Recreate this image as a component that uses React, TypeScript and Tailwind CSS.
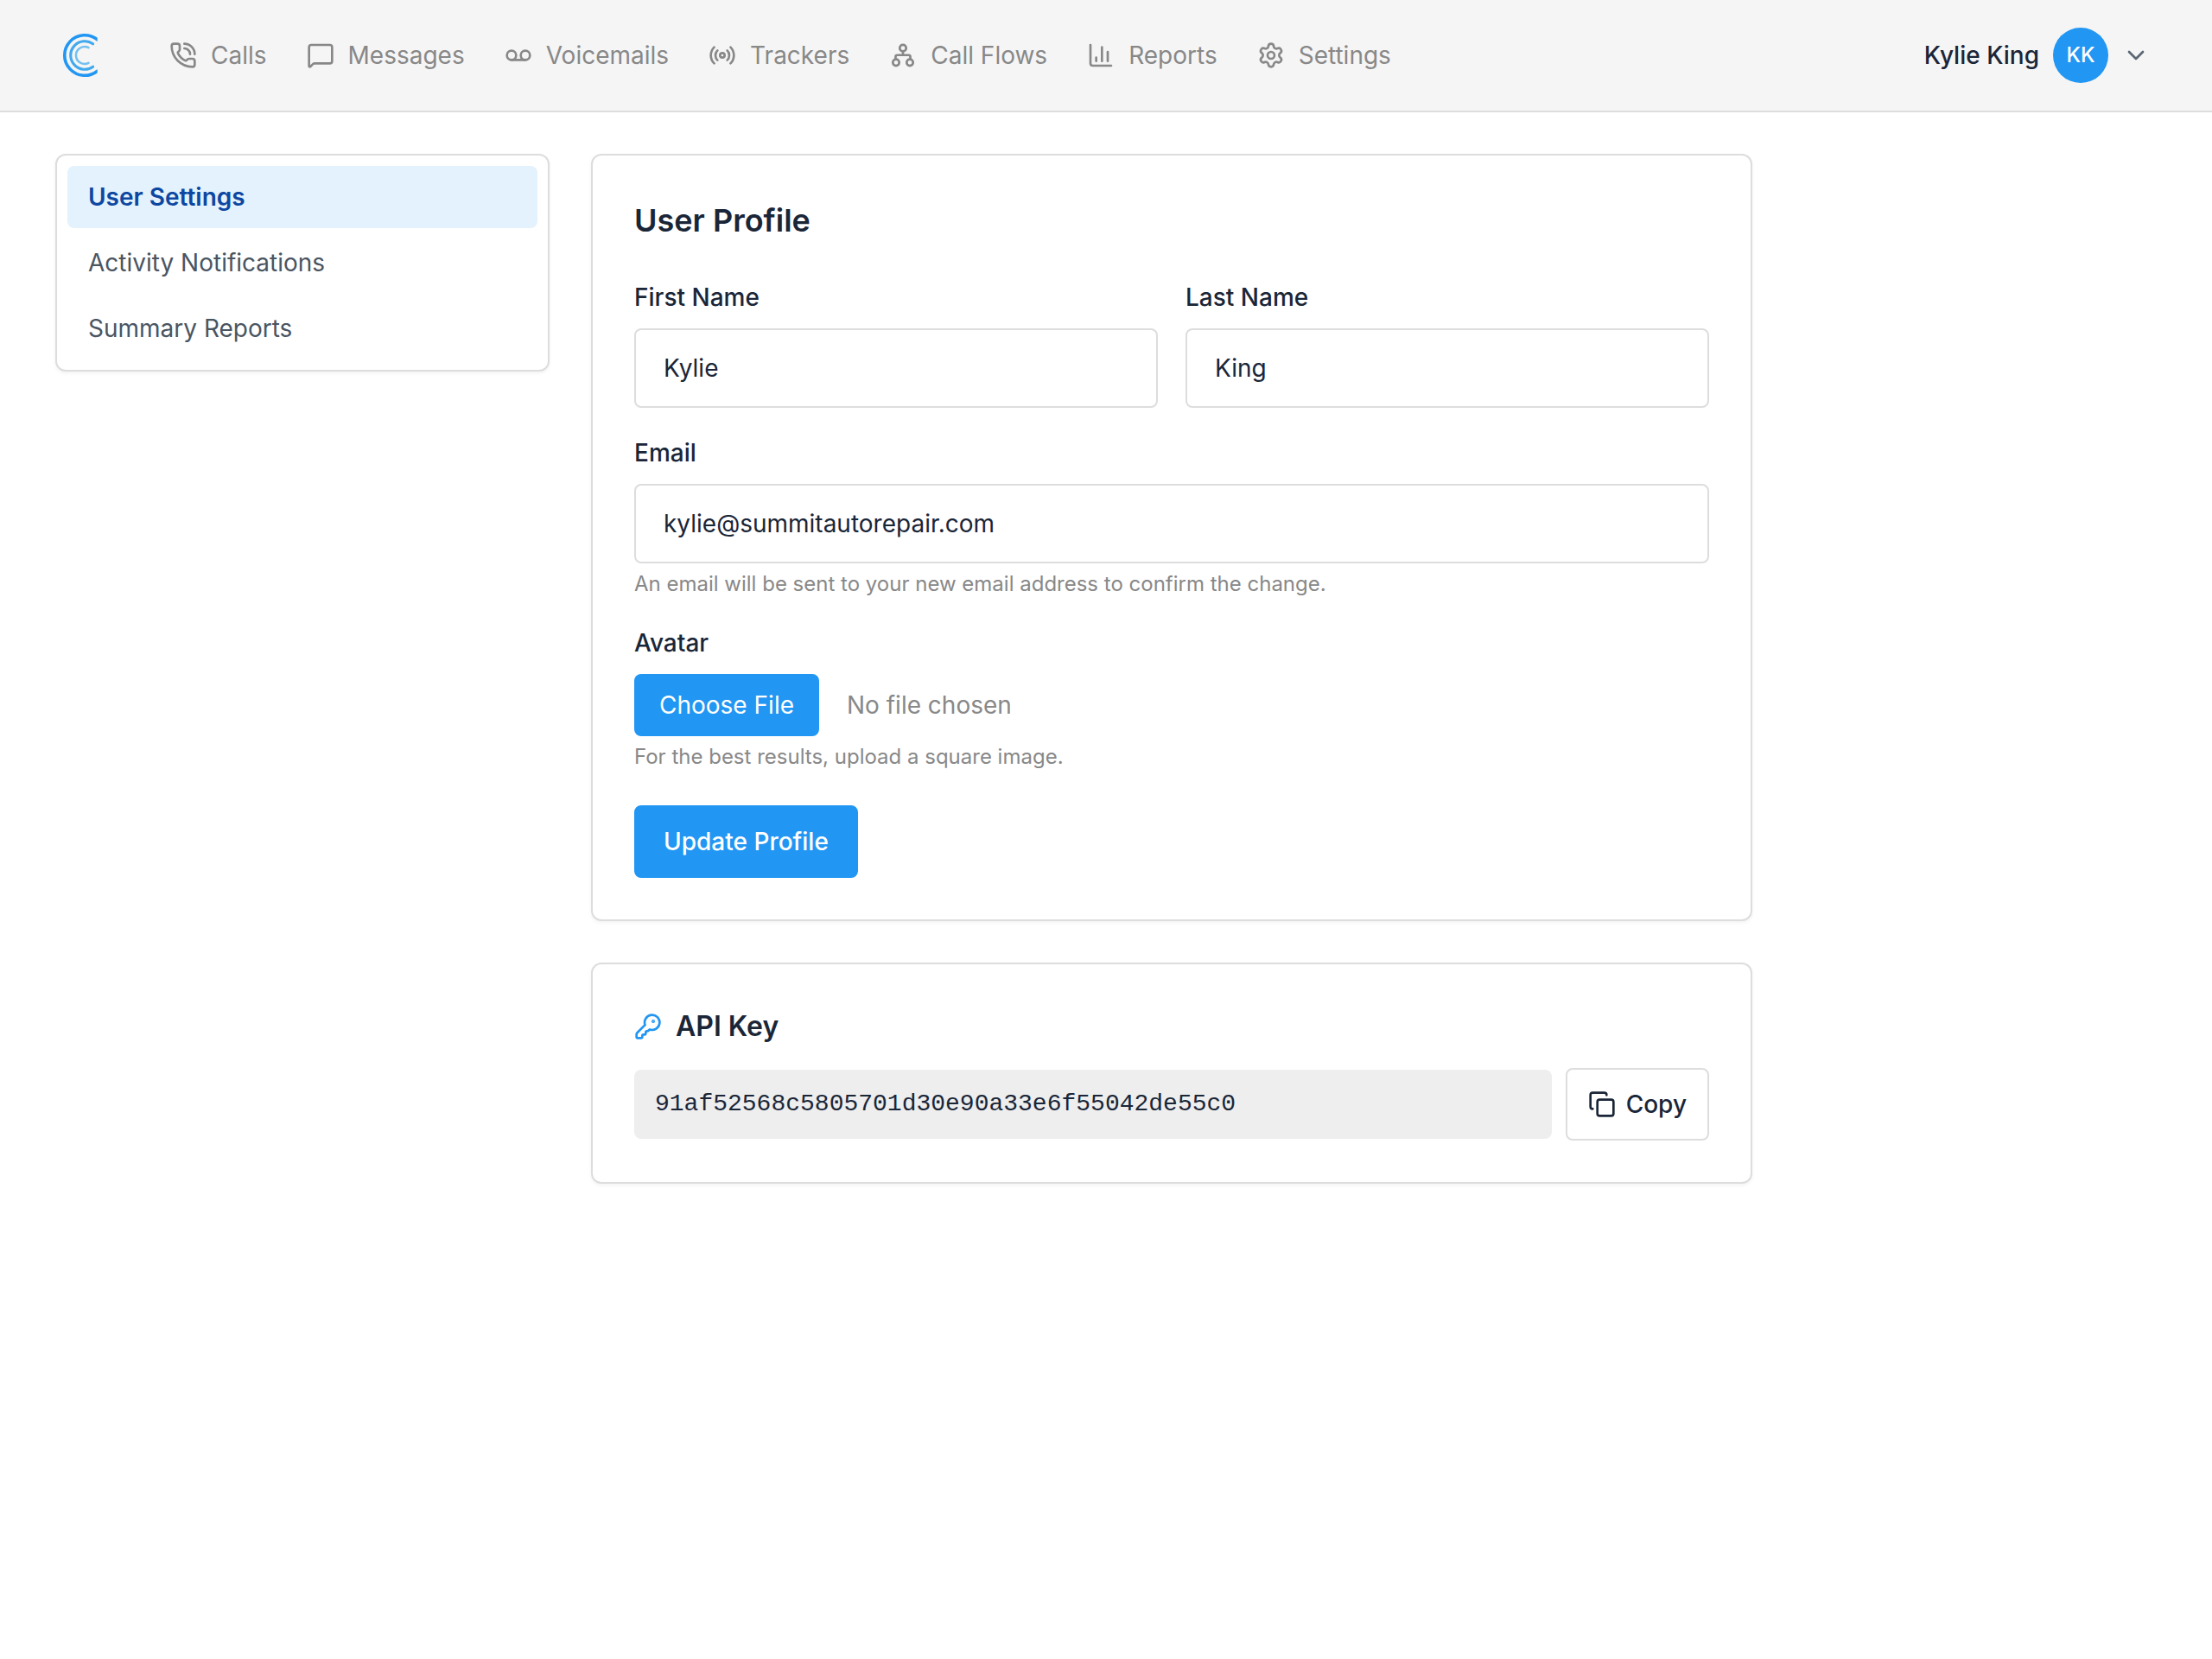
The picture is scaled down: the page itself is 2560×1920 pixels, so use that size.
import React, { useState } from "react";
import {
  ChartColumn,
  ChevronDown,
  Copy,
  KeyRound,
  MessageSquare,
  PhoneCall,
  Radio,
  Settings,
  Voicemail,
} from "lucide-react";

const CallFlowIcon = ({ className }: { className?: string }) => (
  <svg
    viewBox="0 0 24 24"
    fill="none"
    stroke="currentColor"
    strokeWidth="2"
    strokeLinecap="round"
    strokeLinejoin="round"
    className={className}
    aria-hidden="true"
  >
    <circle cx="12" cy="5.75" r="2.8" />
    <circle cx="6" cy="18.25" r="2.8" />
    <circle cx="18" cy="18.25" r="2.8" />
    <path d="M12 8.6v3.2" />
    <path d="M5.6 15.4v-2.1a1.5 1.5 0 0 1 1.5-1.5h9.8a1.5 1.5 0 0 1 1.5 1.5v2.1" />
  </svg>
);

const Logo = () => (
  <svg viewBox="0 0 64 64" fill="none" className="h-16 w-16" aria-hidden="true">
    <defs>
      <clipPath id="logo-edge">
        <rect x="0" y="0" width="48.7" height="64" />
      </clipPath>
    </defs>
    <g clipPath="url(#logo-edge)" strokeLinecap="round">
      <path d="M48.7 13.9A23.3 23.3 0 1 0 48.7 50.1" stroke="#2196f3" strokeWidth="3.6" />
      <path d="M43.6 18.8A16.3 16.3 0 1 0 43.6 45.2" stroke="#42a9ee" strokeWidth="3.1" />
      <path d="M38.5 23.1A10 10 0 1 0 38.5 40.9" stroke="#74c0f0" strokeWidth="2.5" />
    </g>
  </svg>
);

const navItems = [
  { label: "Calls", icon: PhoneCall },
  { label: "Messages", icon: MessageSquare },
  { label: "Voicemails", icon: Voicemail },
  { label: "Trackers", icon: Radio },
  { label: "Call Flows", icon: CallFlowIcon },
  { label: "Reports", icon: ChartColumn },
  { label: "Settings", icon: Settings },
];

const sideItems = ["User Settings", "Activity Notifications", "Summary Reports"];

const apiKey = "91af52568c5805701d30e90a33e6f55042de55c0";

const cardClass = "rounded-xl border-2 border-[#dddddd] bg-white shadow-[0_2px_4px_rgba(0,0,0,0.05)]";
const inputClass =
  "h-[92px] w-full rounded-lg border-2 border-[#dddddd] bg-white px-8 text-[28px] leading-10 outline-none focus:border-[#2196f3]";

const Header = () => (
  <header className="flex items-center justify-between border-b-2 border-[#dddddd] bg-[#f5f5f5] px-16 py-8">
    <div className="flex items-center">
      <a href="#" aria-label="Home" className="mr-17">
        <Logo />
      </a>
      <nav className="flex items-center gap-[46px]">
        {navItems.map((item) => (
          <a
            key={item.label}
            href="#"
            className="flex items-center gap-4 text-[28px] leading-10 text-[#888888]"
          >
            <item.icon className="h-8 w-8" />
            {item.label}
          </a>
        ))}
      </nav>
    </div>
    <button type="button" className="flex items-center gap-4 px-2 text-[28px] leading-10 font-medium">
      Kylie King
      <span className="flex h-16 w-16 items-center justify-center rounded-full bg-[#2196f3] text-2xl text-white">
        KK
      </span>
      <ChevronDown className="h-8 w-8 text-[#5a6673]" />
    </button>
  </header>
);

const Sidebar = () => (
  <aside className={`self-start p-3 ${cardClass}`}>
    <nav className="flex flex-col gap-1">
      {sideItems.map((label, i) => (
        <a
          key={label}
          href="#"
          className={`rounded-lg px-6 py-4 text-[28px] leading-10 ${
            i === 0 ? "bg-[#e3f2fd] font-semibold text-[#0d47a1]" : "text-[#4a5562]"
          }`}
        >
          {label}
        </a>
      ))}
    </nav>
  </aside>
);

const Field = ({
  id,
  label,
  hint,
  children,
}: {
  id: string;
  label: string;
  hint?: string;
  children: React.ReactNode;
}) => (
  <div>
    <label htmlFor={id} className="mb-4 block text-[28px] leading-10 font-medium">
      {label}
    </label>
    {children}
    {hint && <p className="mt-2 text-2xl leading-8 text-[#888888]">{hint}</p>}
  </div>
);

const ProfileCard = () => {
  const [firstName, setFirstName] = useState("Kylie");
  const [lastName, setLastName] = useState("King");
  const [email, setEmail] = useState("kylie@summitautorepair.com");

  return (
    <section className={`p-12 ${cardClass}`}>
      <h2 className="mb-[42px] text-4xl leading-[54px] font-semibold">User Profile</h2>
      <form className="flex flex-col gap-8" onSubmit={(e) => e.preventDefault()}>
        <div className="grid grid-cols-2 gap-8">
          <Field id="first-name" label="First Name">
            <input
              id="first-name"
              type="text"
              value={firstName}
              onChange={(e) => setFirstName(e.target.value)}
              className={inputClass}
            />
          </Field>
          <Field id="last-name" label="Last Name">
            <input
              id="last-name"
              type="text"
              value={lastName}
              onChange={(e) => setLastName(e.target.value)}
              className={inputClass}
            />
          </Field>
        </div>
        <Field
          id="email"
          label="Email"
          hint="An email will be sent to your new email address to confirm the change."
        >
          <input
            id="email"
            type="email"
            value={email}
            onChange={(e) => setEmail(e.target.value)}
            className={inputClass}
          />
        </Field>
        <Field id="avatar" label="Avatar" hint="For the best results, upload a square image.">
          <input
            id="avatar"
            type="file"
            accept="image/*"
            className="block w-full text-[28px] leading-10 text-[#888888] file:mr-8 file:rounded-lg file:bg-[#2196f3] file:px-[29px] file:py-4 file:text-white"
          />
        </Field>
        <button
          type="submit"
          className="mt-2 h-[84px] self-start rounded-lg border-2 border-[#2196f3] bg-[#2196f3] px-8 text-[28px] leading-10 font-medium text-white"
        >
          Update Profile
        </button>
      </form>
    </section>
  );
};

const ApiKeyCard = () => (
  <section className={`p-12 ${cardClass}`}>
    <h2 className="mb-6 flex items-center gap-4 text-[32px] leading-12 font-semibold">
      <KeyRound className="h-8 w-8 text-[#2196f3]" />
      API Key
    </h2>
    <div className="flex items-center gap-4">
      <code className="flex-1 rounded-lg bg-[#eeeeee] px-6 py-5 font-['Liberation_Mono',monospace] text-[28px] leading-10">
        {apiKey}
      </code>
      <button
        type="button"
        onClick={() => navigator.clipboard?.writeText(apiKey)}
        className="flex h-[84px] items-center gap-3 rounded-lg border-2 border-[#dddddd] bg-white px-6 text-[28px] leading-10 font-medium"
      >
        <Copy className="h-8 w-8" />
        Copy
      </button>
    </div>
  </section>
);

export default function App() {
  return (
    <div className="min-h-screen bg-white font-['Inter',sans-serif] text-[#1a2638]">
      <Header />
      <main className="grid grid-cols-4 gap-12 px-16 py-12">
        <Sidebar />
        <div className="col-span-3 flex max-w-[1344px] flex-col gap-12">
          <ProfileCard />
          <ApiKeyCard />
        </div>
      </main>
    </div>
  );
}
